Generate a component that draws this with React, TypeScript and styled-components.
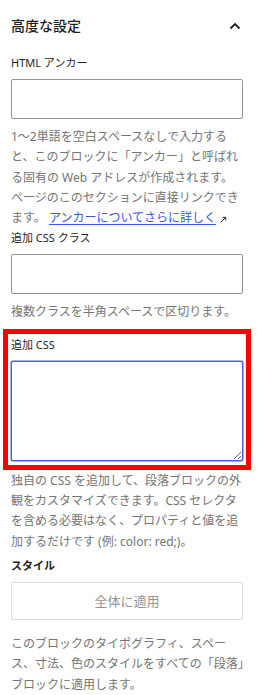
import * as React from 'react';
import styled, { createGlobalStyle } from 'styled-components';

const GlobalStyle = createGlobalStyle`
  html, body {
    margin: 0;
    padding: 0;
    background: #fff;
  }
  body {
    font-family: "Noto Sans", "Noto Sans CJK JP", sans-serif;
    color: #1e1e1e;
    -webkit-font-smoothing: antialiased;
  }
  * {
    box-sizing: border-box;
  }
`;

const Panel = styled.div`
  width: 259px;
  padding: 0 16px 0 11px;
`;

const PanelHeader = styled.div`
  height: 52px;
  display: flex;
  align-items: center;
  justify-content: space-between;
`;

const PanelTitle = styled.h2`
  margin: 0;
  font-size: 14px;
  font-weight: 500;
  line-height: 20px;
  color: #1e1e1e;
`;

const ToggleButton = styled.button`
  width: 20px;
  height: 20px;
  padding: 0;
  border: none;
  background: none;
  display: flex;
  align-items: center;
  justify-content: center;
  margin-right: -2px;
  color: #1e1e1e;
`;

const Field = styled.div<{ $top?: number }>`
  position: relative;
  margin-top: ${(p) => p.$top ?? 4}px;
`;

const Highlight = styled.div`
  position: absolute;
  top: -8px;
  left: -8px;
  right: -8px;
  bottom: -9px;
  border: 5px solid #ff0000;
  pointer-events: none;
`;

const Label = styled.label<{ $strong?: boolean }>`
  display: block;
  font-size: 11px;
  font-weight: ${(p) => (p.$strong ? 600 : 400)};
  line-height: 16px;
  margin-bottom: 8px;
  color: #1e1e1e;
`;

const TextInput = styled.input`
  display: block;
  width: 100%;
  height: 40px;
  border: 1px solid #949494;
  border-radius: 2px;
  background: #fff;
  font: inherit;
  padding: 0 8px;
`;

const TextArea = styled.textarea`
  display: block;
  width: 100%;
  height: 100px;
  border: 1px solid #4a5ee0;
  border-radius: 2px;
  background: #fff;
  font: inherit;
  padding: 8px;
  resize: vertical;
  outline: none;
  box-shadow: 0 0 0 0.5px #4a5ee0;
`;

const GhostButton = styled.button`
  display: block;
  width: 100%;
  height: 38px;
  border: 1px solid #dddddd;
  border-radius: 2px;
  background: #fff;
  color: #949494;
  font-family: "Noto Sans", "Noto Sans CJK JP", sans-serif;
  font-size: 13px;
`;

const Help = styled.p<{ $gap?: number; $nowrap?: boolean }>`
  margin: ${(p) => p.$gap ?? 8}px 0 0;
  font-size: 12px;
  line-height: 20.3px;
  color: #757575;
  white-space: ${(p) => (p.$nowrap ? 'nowrap' : 'normal')};
`;

const HelpLink = styled.a`
  color: #3858e9;
  text-decoration: underline;
  text-underline-offset: 2px;
`;

const ExternalIcon = styled.svg`
  display: inline-block;
  vertical-align: -1px;
  margin-left: 4px;
`;

const Chevron = () => (
  <svg width="14" height="14" viewBox="0 0 14 14" fill="none">
    <path d="M2.5 9.5 L7 5 L11.5 9.5" stroke="currentColor" strokeWidth="1.8" />
  </svg>
);

const App: React.FC = () => {
  return (
    <>
      <GlobalStyle />
      <Panel>
        <PanelHeader>
          <PanelTitle>高度な設定</PanelTitle>
          <ToggleButton aria-label="閉じる">
            <Chevron />
          </ToggleButton>
        </PanelHeader>

        <Field $top={3}>
          <Label>HTML アンカー</Label>
          <TextInput type="text" />
          <Help>
            1〜2単語を空白スペースなしで入力すると、このブロックに「アンカー」と呼ばれる固有の Web
            アドレスが作成されます。ページのこのセクションに直接リンクできます。{' '}
            <HelpLink href="#">アンカーについてさらに詳しく</HelpLink>
            <ExternalIcon width="7" height="7" viewBox="0 0 8 8">
              <path d="M1 7 L6.5 1.5 M3 1.5 H6.5 V5" stroke="#1e1e1e" strokeWidth="1.1" fill="none" />
            </ExternalIcon>
          </Help>
        </Field>

        <Field $top={2}>
          <Label>追加 CSS クラス</Label>
          <TextInput type="text" />
          <Help>複数クラスを半角スペースで区切ります。</Help>
        </Field>

        <Field $top={14}>
          <Highlight />
          <Label>追加 CSS</Label>
          <TextArea />
        </Field>
        <Help $gap={10}>
          独自の CSS を追加して、段落ブロックの外観をカスタマイズできます。CSS
          セレクタを含める必要はなく、プロパティと値を追加するだけです (例: color: red;)。
        </Help>

        <Field $top={6}>
          <Label $strong>スタイル</Label>
          <GhostButton type="button">全体に適用</GhostButton>
          <Help $gap={14} $nowrap>
            このブロックのタイポグラフィ、スペー
            <br />
            ス、寸法、色のスタイルをすべての「段落」
            <br />
            ブロックに適用します。
          </Help>
        </Field>
      </Panel>
    </>
  );
};

export default App;
